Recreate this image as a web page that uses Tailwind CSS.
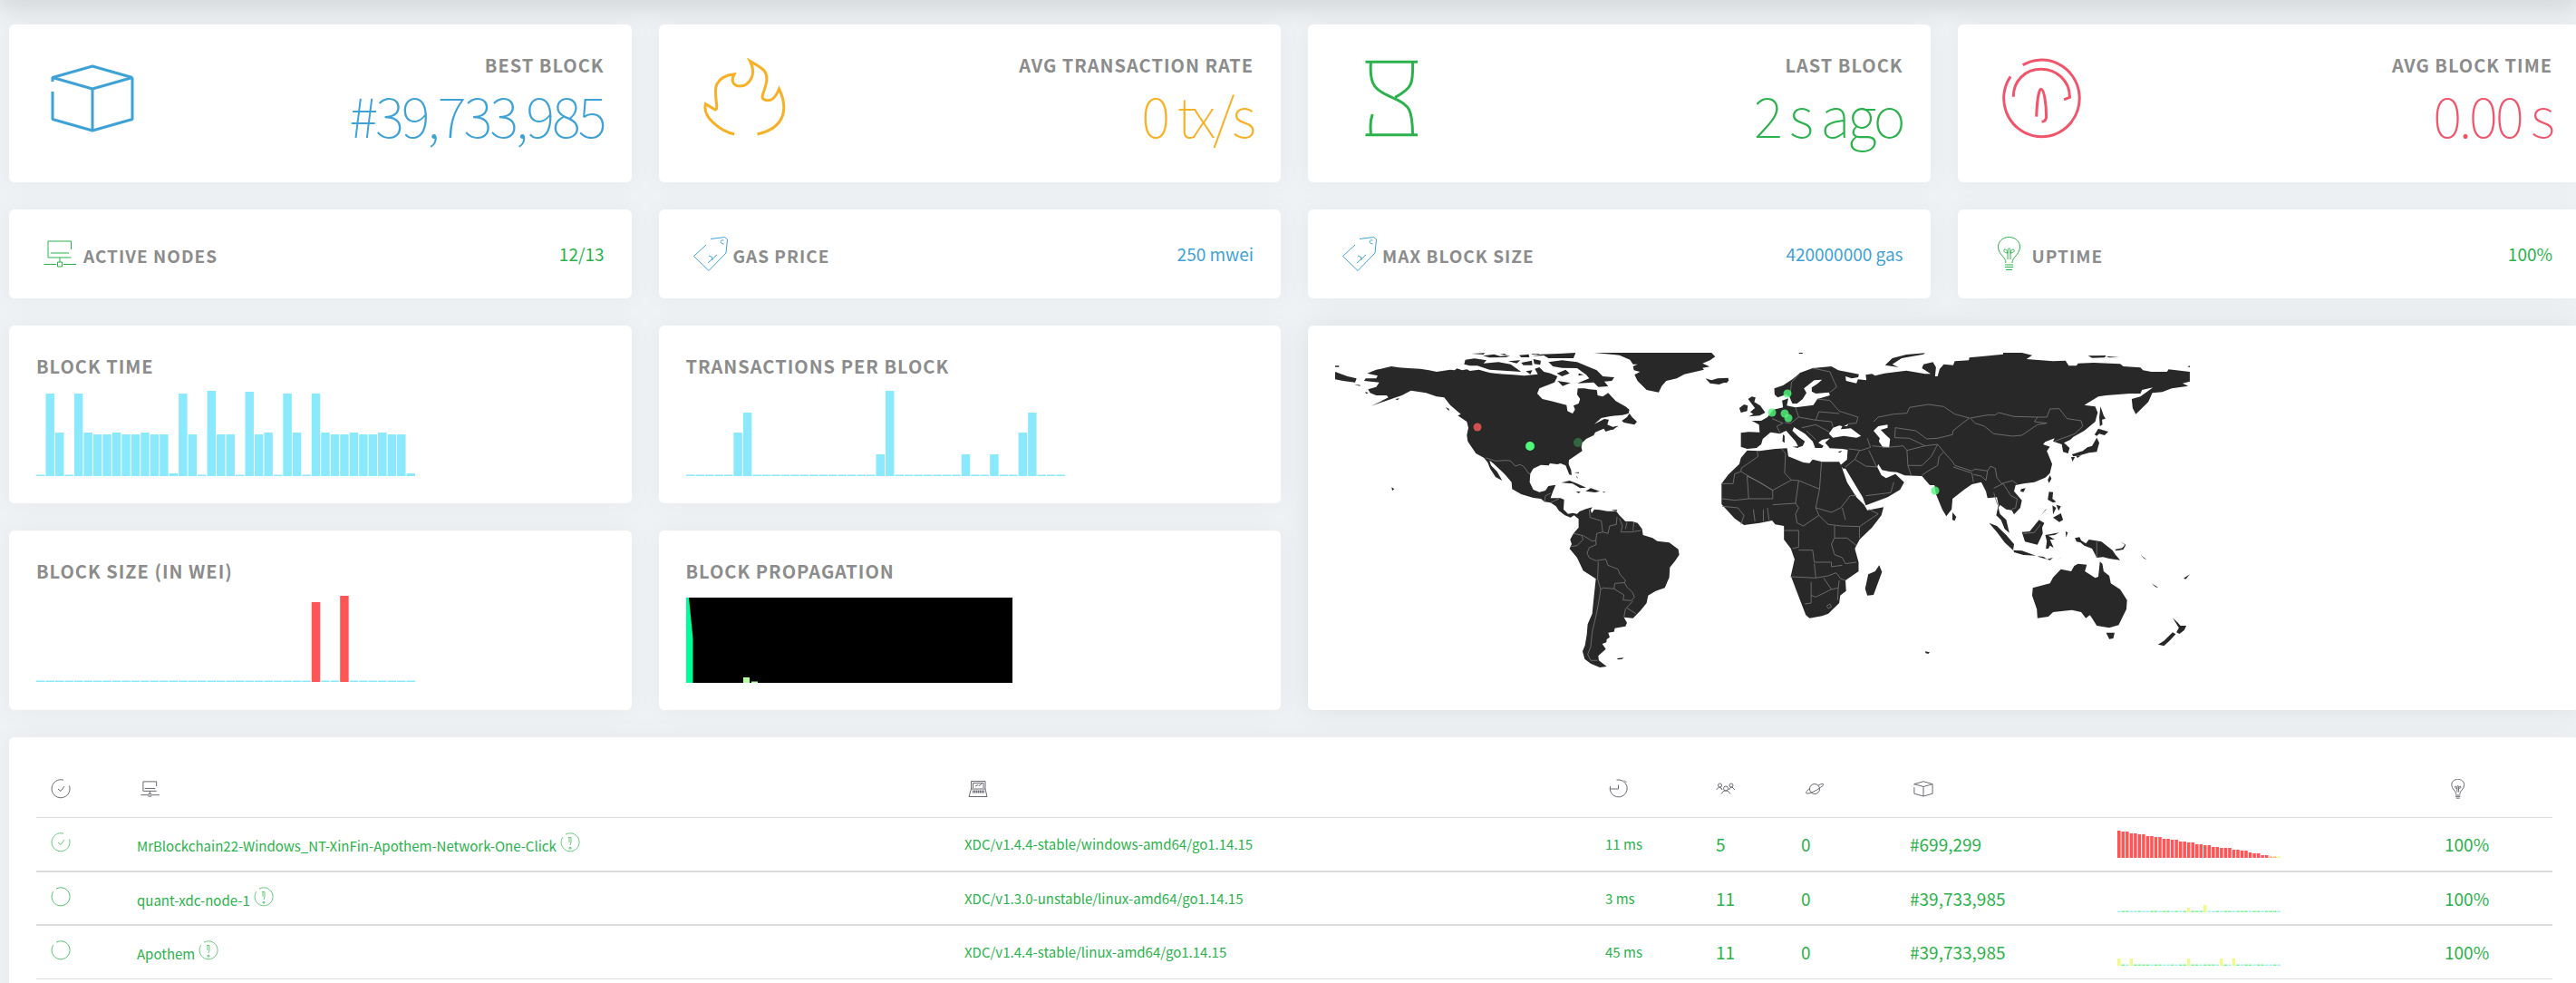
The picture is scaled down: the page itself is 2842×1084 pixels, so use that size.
<!DOCTYPE html>
<html lang="en">
<head>
<meta charset="utf-8">
<title>Network stats</title>
<script src="https://cdn.jsdelivr.net/npm/@tailwindcss/browser@4"></script>
</head>
<body class="overflow-x-hidden bg-[#eef2f5] font-['Noto_Sans_CJK_SC','Noto_Sans',sans-serif] text-[#2bb24c]">

<svg class="hidden" aria-hidden="true">
  <symbol id="cube" viewBox="0 0 96 96"><path stroke-linejoin="bevel" vector-effect="non-scaling-stroke" d="M4 29V24.500L48 12L92 24.500L48 37L4 24.500M4 40V70.500L48 83L92 70.500V24.500M48 37V83"/></symbol>
  <symbol id="nodes" viewBox="0 0 38 38"><path vector-effect="non-scaling-stroke" d="M30.500 14V5H5V23H30.500M8 18H28M18 23V28M15.500 28H20.500V33H15.500ZM0.500 30.500H14M22 30.500H36"/></symbol>
  <symbol id="tag" viewBox="0 0 38 38"><path vector-effect="non-scaling-stroke" d="M14 9L.500 21.500L17 37.500L36 18L37.500 3L34.500 .500L19 2.500M33.500 4C29 3 29 8 33.500 8M16 29L26 20M17 21L20.500 22.500L21 26"/></symbol>
  <symbol id="bulb" viewBox="0 0 38 38"><path vector-effect="non-scaling-stroke" d="M15 29C15 22 6.500 20 6.500 11C6.500 5 12 .500 18.500 .500C25 .500 30.500 5 30.500 11C30.500 20 22 22 22 29M14 31H23M14 33.500H23M15 36.500H22M17 25V18C14 18 12 16 13 14.500C15 13 17 16 17 18C17 15 17 13 18.500 13C20 13 20 15 20 18C20 16 22 13 24 14.500C25 16 23 18 20 18V25"/></symbol>
  <symbol id="checked" viewBox="0 0 22 22"><path vector-effect="non-scaling-stroke" d="M14 1.200A10 10 0 1 0 20.500 7.500M8 11L11 13.500L15 8"/></symbol>
  <symbol id="ring" viewBox="0 0 22 22"><path vector-effect="non-scaling-stroke" d="M6 2.200A10 10 0 1 1 2.800 5.200"/></symbol>
  <symbol id="info" viewBox="0 0 22 22"><path vector-effect="non-scaling-stroke" d="M6 2.200A10 10 0 1 1 2.800 5.200M9 5.500H12V11L11 14M10 6V11M10 16.500H12V18H10Z"/></symbol>
</svg>

<header class="-mt-5 h-5 shadow-[0_0_30px_4px_rgba(0,0,0,0.16)]"></header>

<main class="-mr-[4px] ml-[10px] flex flex-col gap-[30px] pt-[27px]">

  <section class="grid grid-cols-4 gap-[30px]">
    <article class="flex justify-between rounded-md bg-white p-[30px] shadow-[0_0_30px_rgba(0,0,0,0.04)]">
      <svg class="mt-1 ml-3.5 size-24 fill-none stroke-[#3fa2d6] stroke-3"><use href="#cube"/></svg>
      <div class="pb-1.5 text-right">
        <h2 class="text-[20px] leading-[30px] font-bold tracking-[1px] text-[#8c8c8c]">BEST BLOCK</h2>
        <p class="text-[61px] leading-[78px] font-thin tracking-[-3px] text-[#3fa2d6]">#39,733,985</p>
      </div>
    </article>
    <article class="flex justify-between rounded-md bg-white p-[30px] shadow-[0_0_30px_rgba(0,0,0,0.04)]">
      <svg viewBox="0 0 96 96" class="mt-1 ml-3.5 size-24 fill-none stroke-[#f8b026] stroke-3"><path vector-effect="non-scaling-stroke" transform="matrix(.4529 0 0 .3333 -60 -62)" d="M219 447C185 437 140 390 149 347L172 366C184 364 165 310 177 280C185 258 205 250 219 248C208 275 220 288 232 288C255 288 275 250 257 205C290 230 302 240 297 275C294 305 280 325 292 333C308 342 320 325 328 297C350 360 345 425 275 447"/></svg>
      <div class="pb-1.5 text-right">
        <h2 class="text-[20px] leading-[30px] font-bold tracking-[1px] text-[#8c8c8c]">AVG TRANSACTION RATE</h2>
        <p class="text-[61px] leading-[78px] font-thin tracking-[-3px] text-[#f8b026]">0 tx/s</p>
      </div>
    </article>
    <article class="flex justify-between rounded-md bg-white p-[30px] shadow-[0_0_30px_rgba(0,0,0,0.04)]">
      <svg viewBox="0 0 96 96" class="mt-1 ml-3.5 size-24 fill-none stroke-[#2bb24c] stroke-3"><path vector-effect="non-scaling-stroke" transform="matrix(.4529 0 0 .3333 -67 -62)" d="M191 208H318M191 449H318M204 210C200 290 215 300 260 328C300 350 305 370 306 448M306 210C307 280 305 295 263 325M208 381C200 410 204 430 204 448"/></svg>
      <div class="pb-1.5 text-right">
        <h2 class="text-[20px] leading-[30px] font-bold tracking-[1px] text-[#8c8c8c]">LAST BLOCK</h2>
        <p class="text-[61px] leading-[78px] font-thin tracking-[-3px]">2 s ago</p>
      </div>
    </article>
    <article class="flex justify-between rounded-md bg-white p-[30px] shadow-[0_0_30px_rgba(0,0,0,0.04)]">
      <svg viewBox="0 0 96 96" class="mt-1 ml-3.5 size-24 fill-none stroke-[#f0556c] stroke-3"><path vector-effect="non-scaling-stroke" transform="matrix(.4541 0 0 .3333 -74 -62)" d="M224 218A92 127 0 1 1 194 256M201 323C201 270 230 232 268 232C306 232 338 270 338 325L324 333M257 389C258 350 262 298 268 298C276 298 281 350 281 389C281 400 278 404 270 406"/></svg>
      <div class="pb-1.5 text-right">
        <h2 class="text-[20px] leading-[30px] font-bold tracking-[1px] text-[#8c8c8c]">AVG BLOCK TIME</h2>
        <p class="text-[61px] leading-[78px] font-thin tracking-[-3px] text-[#f0556c]">0.00 s</p>
      </div>
    </article>
  </section>

  <section class="grid grid-cols-4 gap-[30px]">
    <article class="flex items-center rounded-md bg-white p-[30px] shadow-[0_0_30px_rgba(0,0,0,0.04)]">
      <svg class="mr-1.5 ml-2 size-[38px] fill-none stroke-current"><use href="#nodes"/></svg>
      <h2 class="pt-1 text-[19px] leading-8 font-bold tracking-[1px] text-[#8c8c8c]">ACTIVE NODES</h2>
      <p class="ml-auto text-[19px] leading-8">12/13</p>
    </article>
    <article class="flex items-center rounded-md bg-white p-[30px] shadow-[0_0_30px_rgba(0,0,0,0.04)]">
      <svg class="mr-1.5 ml-2 size-[38px] fill-none stroke-[#3fa2d6]"><use href="#tag"/></svg>
      <h2 class="pt-1 text-[19px] leading-8 font-bold tracking-[1px] text-[#8c8c8c]">GAS PRICE</h2>
      <p class="ml-auto text-[19px] leading-8 text-[#3fa2d6]">250 mwei</p>
    </article>
    <article class="flex items-center rounded-md bg-white p-[30px] shadow-[0_0_30px_rgba(0,0,0,0.04)]">
      <svg class="mr-1.5 ml-2 size-[38px] fill-none stroke-[#3fa2d6]"><use href="#tag"/></svg>
      <h2 class="pt-1 text-[19px] leading-8 font-bold tracking-[1px] text-[#8c8c8c]">MAX BLOCK SIZE</h2>
      <p class="ml-auto text-[19px] leading-8 text-[#3fa2d6]">420000000 gas</p>
    </article>
    <article class="flex items-center rounded-md bg-white p-[30px] shadow-[0_0_30px_rgba(0,0,0,0.04)]">
      <svg class="mr-1.5 ml-2 size-[38px] fill-none stroke-current"><use href="#bulb"/></svg>
      <h2 class="pt-1 text-[19px] leading-8 font-bold tracking-[1px] text-[#8c8c8c]">UPTIME</h2>
      <p class="ml-auto text-[19px] leading-8">100%</p>
    </article>
  </section>

  <section class="grid grid-cols-4 gap-[30px]">
    <article class="rounded-md bg-white p-[30px] shadow-[0_0_30px_rgba(0,0,0,0.04)]">
      <h2 class="mb-3 text-[20px] leading-[30px] font-bold tracking-[1px] text-[#8c8c8c]">BLOCK TIME</h2>
      <svg id="block-time" viewBox="0 0 418 94" class="h-[94px] w-[418px]"></svg>
    </article>
    <article class="rounded-md bg-white p-[30px] shadow-[0_0_30px_rgba(0,0,0,0.04)]">
      <h2 class="mb-3 text-[20px] leading-[30px] font-bold tracking-[1px] text-[#8c8c8c]">TRANSACTIONS PER BLOCK</h2>
      <svg id="transactions" viewBox="0 0 418 94" class="h-[94px] w-[418px]"></svg>
    </article>
    <article class="col-span-2 row-span-2 rounded-md bg-white p-[30px] shadow-[0_0_30px_rgba(0,0,0,0.08)]">
      <svg viewBox="0 0 943 360" class="h-[360px] w-[943px]" role="img" aria-label="Map of the nodes">
        <g transform="matrix(.3333 0 0 .3333 -33 -29)" fill="#282828">
          <path d="M205 155L235 143L260 138L285 132L310 136L340 138L380 140L410 145L435 150L480 143L495 145L502 139L520 145L535 142L545 147L575 143L610 153L640 157L690 160L725 163L770 158L760 140L775 135L790 150L812 155L835 165L825 185L800 195L775 205L768 222L785 240L820 248L865 260L868 280L885 288L893 275L888 262L905 255L910 240L900 225L902 205L925 205L940 208L965 210L968 228L985 232L1003 220L1028 247L1060 265L1073 275L1070 288L1050 293L1010 297L980 303L957 323L990 306L1005 308L1000 325L1018 332L1038 330L1010 342L995 348L988 338L960 350L955 360L930 372L917 385L914 400L917 412L893 428L873 442L872 455L880 475L882 492L874 490L862 460L845 453L835 456L810 453L806 460L780 458L755 470L745 487L743 515L755 540L775 548L795 543L805 528L829 524L820 545L812 568L845 568L857 573L855 605L870 620L885 617L900 620L908 612L925 605L932 603L950 598L945 607L948 618L957 605L975 607L1000 611L1030 612L1040 625L1060 645L1082 645L1100 650L1115 670L1118 690L1150 700L1165 710L1205 715L1235 737L1238 755L1225 775L1207 797L1205 830L1190 865L1160 875L1135 890L1130 915L1110 940L1085 965L1055 962L1065 980L1060 992L1025 998L1022 1010L1003 1013L1008 1028L998 1035L997 1045L983 1050L995 1067L970 1090L972 1105L998 1125L975 1128L945 1115L925 1100L918 1075L926 1055L932 1020L935 985L950 950L955 900L962 835L920 808L900 765L875 735L882 720L877 705L888 685L905 665L905 637L890 625L878 632L860 625L840 610L830 595L812 583L792 580L780 570L755 567L715 555L685 538L683 515L660 488L625 455L610 443L615 460L635 480L652 510L630 498L612 470L604 450L592 435L565 420L538 380L535 360L540 335L535 315L505 295L515 290L480 260L460 235L435 232L400 220L350 212L320 228L300 235L270 245L218 263L250 248L275 235L270 228L235 228L215 220L208 208L235 200L245 185L195 180L200 172L235 172L240 163L225 160Z"/>
          <path d="M955 87H1345L1357 100L1340 112L1315 122L1339 133L1315 137L1320 143L1255 158L1230 172L1195 180L1180 197L1170 218L1130 210L1100 180L1090 160L1108 150L1088 145L1085 132L1100 125L1085 125L1075 110L1040 95ZM1325 172L1345 178L1365 172L1400 170L1402 180L1370 192L1340 188Z"/>
          <path d="M99 150L140 165L170 172L165 185L125 180L99 175ZM99 130H112V134H99ZM162 191L183 194L180 197ZM198 217L210 219L202 223ZM298 240L312 238L305 244ZM255 517L262 521M286 532L295 538L288 543ZM464 267L476 272V280ZM510 293L532 300L550 320L540 315Z"/>
          <path d="M530 110L560 106L600 112L590 122L640 118L680 125L715 150L680 148L610 143L570 130L545 130L526 125ZM550 90L595 88L590 93ZM588 97L625 92L645 98L678 97L665 102L610 103ZM645 92L660 90L668 96ZM708 95L740 92L742 102L715 102ZM715 120L750 113L752 128L722 128ZM672 115L712 112L700 122ZM755 108L780 113L778 127L758 124ZM780 92L840 90L895 87L888 105L805 105L790 96L752 98ZM805 118L850 112L900 118L925 128L965 145L985 165L1023 168L1015 180L990 182L1003 198L970 200L955 185L900 188L940 172L930 160L900 138L850 137L820 132ZM833 155L862 143L875 155L850 165ZM835 180L878 187L852 197ZM730 148L752 145L745 158ZM603 157L650 155L620 160ZM750 90H775V92H750ZM905 155L922 160L905 163Z"/>
          <path d="M1073 288L1082 300L1098 315L1090 325L1055 318L1048 312L1065 300ZM992 345L1015 336L1035 328L1020 341ZM848 517L875 510L900 520L930 533L910 535L885 520ZM928 545L945 535L975 545L960 549ZM896 546L912 547L905 552ZM984 546L995 548L988 550ZM890 483L906 482V486ZM898 493L903 503L899 500ZM1032 1098L1055 1096L1048 1101L1035 1102ZM1012 608L1033 606L1030 611Z"/>
          <path fill="none" stroke="#777" stroke-width="2.500" d="M598 435L630 445L665 443L680 445L695 462L712 457L725 465L740 487L745 487M792 580L795 560L812 552M812 583L840 570M940 605L943 632L980 643L985 680L1002 685L1008 660L1030 655L1032 630M1040 635L1050 660L1045 680L1080 680L1112 675M1065 648L1060 670M1088 647L1085 675M888 685L920 692L950 710L962 708L965 685L985 680M962 708L963 722L940 732L933 750L940 765L962 775L995 770L1002 790L1035 803L1042 820L1060 840L1057 848L1025 850L1022 868L985 865L978 870L968 835L970 778M880 728L900 725L920 705L915 692M1022 868L1055 888L1052 905L1080 907L1090 895L1083 880L1065 862L1057 848M1085 908L1060 935L1055 962M1065 932L1095 950M978 870L970 920L962 960L950 1010L945 1060L935 1085L945 1105L968 1105"/>
        </g>
        <g transform="matrix(.3444 0 0 .3333 427 -29)" fill="#282828">
          <path d="M60 352L85 349L120 350L118 325L95 312L125 312L145 300L165 275L195 268L192 245L212 238L207 262L235 268L292 260L305 240L345 228L342 218L300 222L287 215L287 202L305 190L320 176L295 178L262 205L270 220L258 240L240 255L225 255L215 232L205 225L178 235L168 225L167 205L195 195L225 175L250 153L290 138L350 132L372 145L438 158L436 168L415 172L395 165L397 180L430 188L435 175L462 178L460 160L480 157L490 163L520 155L590 146L650 157L668 157L640 138L645 125L675 118L685 135L682 165L690 165L697 140L710 125L740 128L745 115L790 112L792 103L840 98L900 92L900 87H960L993 95L975 108L1060 115L1100 113L1110 130L1135 130L1140 122L1190 120L1275 124L1285 132L1340 136L1348 145L1375 150L1425 150L1430 142L1498 150V182L1475 188L1493 197L1440 205L1410 217L1378 220L1365 250L1325 290L1315 270L1312 240L1340 232L1380 202L1345 210L1340 222L1305 222L1230 228L1205 232L1160 260L1195 265L1203 285L1195 315L1160 345L1125 365L1115 375L1095 385L1113 402L1108 420L1092 415L1088 390L1060 380L1065 370L1035 382L1028 390L1050 398L1040 412L1057 455L1050 485L1035 500L1000 515L965 520L940 525L935 545L960 575L955 600L935 622L928 608L910 605L890 590L885 600L890 620L910 640L920 683L905 670L893 640L878 625L885 590L880 565L850 568L845 545L830 515L800 522L775 540L738 570L735 605L718 628L705 605L685 555L680 525L665 525L640 495L585 493L560 482L535 480L512 475L500 455L497 465L510 492L525 502L555 488L583 515L570 540L530 565L460 592L450 565L395 470L388 470L378 460L400 440L402 408L385 405L345 403L330 385L345 370L320 375L308 385L325 395L320 402L298 402L290 380L265 355L230 333L225 345L245 365L265 380L258 395L245 400L235 380L205 345L185 355L155 350L130 372L125 390L110 402L80 405L60 398Z"/>
          <path d="M80 410L120 412L170 405L208 403L212 430L260 450L280 452L290 440L320 448L375 448L382 462L400 515L430 565L455 590L465 608L517 598L510 625L480 665L440 705L425 735L437 780V810L395 840L397 875L378 890L375 915L340 950L320 958L280 965L268 955L240 880L220 825L232 770L220 735L198 705V660L170 655L160 642L120 650L70 657L40 635L-2 588V520L20 490L55 455L60 435ZM503 790L512 812L485 888L465 890L458 868L468 820L490 810Z"/>
          <path d="M83 240L95 232L107 235L103 250L122 262L138 285L120 295L85 298L100 290L90 283L105 270ZM55 270L70 258L82 262L80 280L60 285ZM0 170L20 178L15 187L0 185ZM522 128L545 105L590 93L650 88L645 92L575 105L545 125L565 135ZM1172 97L1230 96L1225 103L1185 104ZM1228 98L1272 102L1240 103ZM1195 115L1220 116M1490 133L1498 130V135ZM195 357L200 362V385L193 380ZM225 398L245 396L243 402ZM308 413L328 414ZM370 415L385 411L378 418ZM246 87H258V90H246Z"/>
          <path d="M1212 265L1222 295L1228 305L1217 308L1218 325L1210 330L1208 300ZM1205 338L1237 348L1225 360L1208 355L1200 362L1193 358ZM1200 368L1208 385L1200 415L1175 418L1150 425L1125 430L1120 423L1155 412L1170 400L1185 395ZM1118 432L1130 432L1122 447ZM1134 428L1150 427L1138 435ZM1050 493L1055 503L1047 518L1043 508ZM958 538L972 535L965 548L955 545ZM738 615L750 630L745 643L737 640ZM1047 547L1060 548L1058 570L1070 580L1060 583L1043 573ZM1058 592L1070 600L1060 622ZM1070 590L1085 595L1078 610ZM1060 632L1085 618L1092 640L1080 647ZM1040 603L1020 627L1035 607ZM855 650L880 660L910 690L935 720L932 740L905 715L880 680ZM933 740L960 742L1005 758L965 756L935 747ZM960 680L985 678L1015 640L1032 650L1025 665L1027 685L1010 722L970 712ZM1035 690L1080 682L1065 690L1045 692L1065 705L1050 705L1062 732L1050 725L1045 735H1037L1040 710ZM1100 678L1107 682L1102 698ZM1010 760L1030 762L1040 770L1060 765L1050 773L1015 763ZM1070 773L1097 758L1080 768ZM1088 718L1125 717ZM1130 700L1145 697L1150 708L1165 718L1175 705L1215 712L1250 740L1260 755L1275 773L1240 768L1220 763L1200 765L1185 735L1160 725L1148 715L1135 712Z"/>
          <path d="M995 865L1050 850L1060 830L1085 803L1118 810L1128 792L1140 785L1168 788L1162 810L1195 832L1205 828L1210 778L1218 785L1222 810L1240 825L1245 850L1275 870L1297 905L1295 935L1270 988L1240 997L1200 990L1185 965L1178 955L1165 965L1150 945L1120 938L1060 945L1045 960L1010 965L1008 935L993 890ZM1230 1013L1257 1013L1253 1032L1240 1034ZM1443 964L1460 980L1468 990L1487 990L1480 1005L1465 1017L1455 1012L1463 997ZM1443 1012L1453 1018L1435 1038L1415 1057L1396 1052L1415 1040ZM1376 850L1398 865L1388 862ZM1478 833L1498 820L1485 836ZM1397 808L1404 822ZM1258 738L1282 733L1290 722L1275 712L1293 722L1285 738L1262 742ZM1305 734L1325 745M1340 755L1360 772L1352 768ZM650 1075L665 1078L660 1083L652 1081Z"/>
          <path fill="#fff" d="M342 355L355 335L375 328L385 330L380 340L412 337L445 362L430 368L390 362L355 368ZM485 345L500 330L530 325L530 335L508 342L525 360L538 372L535 400L515 400L502 380L505 370ZM390 330L405 322L400 330Z"/>
          <path fill="none" stroke="#777" stroke-width="2.500" d="M218 225L222 185L250 153M345 150L360 185L367 200L345 218M290 138L345 150M305 240L345 245L375 280L435 300L430 320L405 322M235 268L245 300L220 320L200 318M160 305L195 320L175 330L185 352M245 300L300 310L350 315L355 332M300 310L310 282L375 288M255 335L300 325L345 350M270 345L300 375M485 315L500 300L550 290L592 287L600 268L660 258L710 265L745 290L792 303L770 320L740 345L738 358L690 370L655 372L620 345L555 335L553 368L600 370L650 395M795 303L850 293H875L885 285L935 298L1010 300L1000 315L1040 320L1010 325L960 360L930 363L870 355L840 330L810 320ZM1010 300L1040 300L1050 273L1080 272L1105 305L1150 312L1155 330L1130 355L1065 380M465 370L475 400L445 410L405 405M440 410L425 440L395 465M470 410L495 465L460 462L425 440M480 395L530 400L580 395L592 410L595 460L605 492M592 410L650 395L690 390L670 430L640 460H595M690 390L710 415L695 430L690 460L665 475L640 492M710 415L740 450L745 460L800 478L810 472L850 478L860 462L875 470L880 500L895 520L930 510L945 522M740 465L800 485L805 515M805 490L830 495L845 510L850 478M870 535L900 520L925 560L945 570L940 600L928 605M870 550L882 590M460 560L540 550L550 515M85 570L80 495L120 515L162 542V570L85 570M60 480L162 542L222 508L245 510L312 538L318 448M62 470L60 480L40 488L35 520H-2M60 470L115 430L112 412M200 485L203 420L190 405M200 485L222 508M162 590L235 585L245 510M312 538L300 600L310 625L260 660L240 650L235 620L245 600L235 585M0 570L40 575L85 570M0 595L50 600L70 625L60 655M100 605L105 645M132 605V645M145 600L150 640M310 625L340 655L380 660L440 662L500 620L470 605M385 600L395 640M300 600L350 615L380 600L410 560L430 560M440 662V700M360 700L400 700L430 725M360 660L360 700L350 720L360 755L385 765L395 785L430 780M198 675L245 675L245 730L225 735M245 740H290L295 780H350L350 795L385 790M295 785L300 832L218 828M300 832L340 825L365 815L380 835L395 840M285 845V915L265 918M285 890L300 895L350 870L372 865L375 840M350 870L325 832M372 865L370 905M335 925L345 918L350 928L340 933ZM1200 712V765M965 685L1000 682L1020 655"/>
        </g>
        <g>
          <circle cx="157" cy="82" r="4.500" fill="#d05050"/>
          <circle cx="215" cy="103" r="5" fill="#50fa7b"/>
          <circle cx="268" cy="99" r="5" fill="#50fa7b" fill-opacity=".3"/>
          <g fill="#50fa7b" fill-opacity=".8">
            <circle cx="499" cy="45" r="4.500"/><circle cx="482" cy="66" r="4.500"/>
            <circle cx="496" cy="67" r="4.500"/><circle cx="500" cy="72" r="4.500"/><circle cx="662" cy="152" r="4.500"/>
          </g>
        </g>
      </svg>
    </article>
    <article class="rounded-md bg-white p-[30px] shadow-[0_0_30px_rgba(0,0,0,0.04)]">
      <h2 class="mb-3 text-[20px] leading-[30px] font-bold tracking-[1px] text-[#8c8c8c]">BLOCK SIZE (IN WEI)</h2>
      <svg id="block-size" viewBox="0 0 418 95" class="h-[95px] w-[418px]"></svg>
    </article>
    <article class="rounded-md bg-white p-[30px] shadow-[0_0_30px_rgba(0,0,0,0.04)]">
      <h2 class="mb-3.5 text-[20px] leading-[30px] font-bold tracking-[1px] text-[#8c8c8c]">BLOCK PROPAGATION</h2>
      <svg viewBox="0 0 360 94" class="h-[94px] w-[360px]"><path d="M0 0H360V94H0Z"/><path fill="#00ff99" d="M0 0H3L7.500 45V94H0Z"/><path fill="#b5ff9d" d="M63 88H70V94H63ZM72 92.500H79V94H72Z"/></svg>
    </article>
  </section>

  <section class="rounded-md bg-white p-[30px] shadow-[0_0_30px_rgba(0,0,0,0.04)]">
    <table class="w-full table-fixed border-separate border-spacing-0 text-left">
      <colgroup>
        <col class="w-[103px]"><col><col class="w-[707px]"><col class="w-[122px]"><col class="w-[94px]"><col class="w-[120px]"><col class="w-[229px]"><col class="w-[361px]"><col class="w-[127px]">
      </colgroup>
      <thead class="text-[#6a6a72]">
        <tr class="h-[58px]">
          <th class="pb-1 pl-4" aria-label="Status"><svg class="size-[22px] fill-none stroke-current stroke-1"><use href="#checked"/></svg></th>
          <th class="pb-1 pl-3" aria-label="Node name"><svg class="size-[22px] fill-none stroke-current stroke-1"><use href="#nodes"/></svg></th>
          <th class="pb-1 pl-3" aria-label="Node type"><svg viewBox="0 0 22 22" class="size-[22px] fill-none stroke-current stroke-1"><path d="M3.500 11V2.500H19V11M5.500 10V4.500H17V10M8 8L11 6.500L12 7.500L15 5.500M3.500 11H19L21 19.500H1Z"/><path stroke-width="3" stroke-dasharray="1.500 .500" d="M5 14H18"/></svg></th>
          <th class="pb-1 pl-3" aria-label="Latency"><svg viewBox="0 0 22 22" class="size-[22px] fill-none stroke-current stroke-1"><path d="M8.500 1H12A9.500 9.500 0 1 1 1.500 8M1 11H10.500V6.500M17 1.500L19.500 4"/></svg></th>
          <th class="pb-1 pl-2" aria-label="Peers"><svg viewBox="0 0 22 22" class="size-[22px] fill-none stroke-current stroke-1"><circle cx="4.500" cy="7" r="2"/><circle cx="17" cy="7" r="2"/><circle cx="11" cy="10.500" r="2.500"/><path d="M.500 12L3.500 9L6 10L7 12M21 12L18 9L15.500 10L14.500 12M6 16.500L9 13L13 13L16 16.500"/></svg></th>
          <th class="pb-1 pl-3" aria-label="Pending transactions"><svg viewBox="0 0 22 22" class="size-[22px] fill-none stroke-current stroke-1"><circle cx="11" cy="11" r="5.500"/><path d="M6 10C0 15 0 17 6 15.500C11 14 17 10 20 7.500C22 5 20 4.500 15 7"/></svg></th>
          <th class="pb-1 pl-3" aria-label="Last block"><svg class="size-[22px] fill-none stroke-current stroke-1"><use href="#cube"/></svg></th>
          <th aria-label="Propagation time"></th>
          <th class="pb-1 pl-3" aria-label="Uptime"><svg class="size-[22px] fill-none stroke-current stroke-1"><use href="#bulb"/></svg></th>
        </tr>
      </thead>
      <tbody class="[&_td]:border-y [&_td]:border-[#dcdcdc] [&_td]:p-0 [&_td]:pl-2 [&_td]:whitespace-nowrap">
        <tr class="h-[60px]">
          <td><svg class="mb-1 ml-2 size-[22px] fill-none stroke-current stroke-1 opacity-70"><use href="#checked"/></svg></td>
          <td><span class="flex items-center gap-1 text-[15px] leading-8"><span class="pt-1">MrBlockchain22-Windows_NT-XinFin-Apothem-Network-One-Click</span><a href="#" aria-label="Node info"><svg class="mb-1 size-[22px] fill-none stroke-current opacity-70"><use href="#info"/></svg></a></span></td>
          <td class="text-[15px] leading-8">XDC/v1.4.4-stable/windows-amd64/go1.14.15</td>
          <td class="text-[15px] leading-8">11 ms</td>
          <td class="text-[19px] leading-8">5</td>
          <td class="text-[19px] leading-8">0</td>
          <td class="text-[19px] leading-8">#699,299</td>
          <td><svg id="history-1" viewBox="0 0 180 30" class="h-[30px] w-[180px]"></svg></td>
          <td class="text-[19px] leading-8">100%</td>
        </tr>
        <tr class="h-[59px]">
          <td><svg class="mb-1 ml-2 size-[22px] fill-none stroke-current stroke-1 opacity-80"><use href="#ring"/></svg></td>
          <td><span class="flex items-center gap-1 text-[15px] leading-8"><span class="pt-1">quant-xdc-node-1</span><a href="#" aria-label="Node info"><svg class="mb-1 size-[22px] fill-none stroke-current opacity-70"><use href="#info"/></svg></a></span></td>
          <td class="text-[15px] leading-8">XDC/v1.3.0-unstable/linux-amd64/go1.14.15</td>
          <td class="text-[15px] leading-8">3 ms</td>
          <td class="text-[19px] leading-8">11</td>
          <td class="text-[19px] leading-8">0</td>
          <td class="text-[19px] leading-8">#39,733,985</td>
          <td><svg id="history-2" viewBox="0 0 180 30" class="h-[30px] w-[180px]"></svg></td>
          <td class="text-[19px] leading-8">100%</td>
        </tr>
        <tr class="h-[60px]">
          <td><svg class="mb-1 ml-2 size-[22px] fill-none stroke-current stroke-1 opacity-80"><use href="#ring"/></svg></td>
          <td><span class="flex items-center gap-1 text-[15px] leading-8"><span class="pt-1">Apothem</span><a href="#" aria-label="Node info"><svg class="mb-1 size-[22px] fill-none stroke-current opacity-70"><use href="#info"/></svg></a></span></td>
          <td class="text-[15px] leading-8">XDC/v1.4.4-stable/linux-amd64/go1.14.15</td>
          <td class="text-[15px] leading-8">45 ms</td>
          <td class="text-[19px] leading-8">11</td>
          <td class="text-[19px] leading-8">0</td>
          <td class="text-[19px] leading-8">#39,733,985</td>
          <td><svg id="history-3" viewBox="0 0 180 30" class="h-[30px] w-[180px]"></svg></td>
          <td class="text-[19px] leading-8">100%</td>
        </tr>
      </tbody>
    </table>
  </section>
</main>

<script>
  // Draws one bar per value; color(value, index) picks its fill.
  function bars(id, values, gap, color) {
    const svg = document.getElementById(id);
    const box = svg.viewBox.baseVal;
    const pitch = (box.width + gap) / values.length;
    values.forEach((v, i) => {
      const r = document.createElementNS('http://www.w3.org/2000/svg', 'rect');
      r.setAttribute('x', i * pitch);
      r.setAttribute('y', box.height - v);
      r.setAttribute('width', pitch - gap);
      r.setAttribute('height', v);
      r.setAttribute('fill', color(v, i));
      svg.appendChild(r);
    });
  }
  function sparse(base, peaks) {
    return Array.from({ length: 40 }, (_, i) => peaks[i] ?? base);
  }
  const blue = () => '#8be9fd';
  bars('block-time', [1.5,91,48,1.5,91,48,46,46,48,46,46,48,46,46,3,91,46,1.5,94,46,46,1.5,93,46,48,1.5,91,48,1.5,91,48,46,46,48,46,46,48,46,46,3], 1, blue);
  bars('transactions', sparse(1.5, {5:48,6:70,20:24,21:94,29:24,32:24,35:48,36:70}), 1, blue);
  bars('block-size', sparse(1.5, {29:88,32:95}), 1, v => v > 2 ? '#ff5555' : '#8be9fd');
  bars('history-1', [30,29,29,27,27,26,26,24,24,23,23,21,21,20,20,18,18,17,17,15,15,14,14,12,12,11,11,11,9,9,8,8,6,5,5,3,3,1.5,1.5,1.5], 1, (v, i) => i > 38 ? '#f1fa8c' : v < 2 ? '#ffb86c' : '#ff5555');
  const calm = pattern => (v, i) => v > 2 ? '#f1fa8c' : pattern[i] === 'g' ? '#7bf59a' : '#a5effd';
  bars('history-2', sparse(1.5, {17:5,21:8}), 1, calm('bggbbgbbggbggbgbg-ggg-bbgbggbgggbggbgggb'));
  bars('history-3', sparse(1.5, {0:8,3:8,17:8,25:8,28:8}), 1, calm('-gb-ggggbggbbgbgg-ggbgggb-gb-gbggbggbbgb'));
</script>
</body>
</html>
